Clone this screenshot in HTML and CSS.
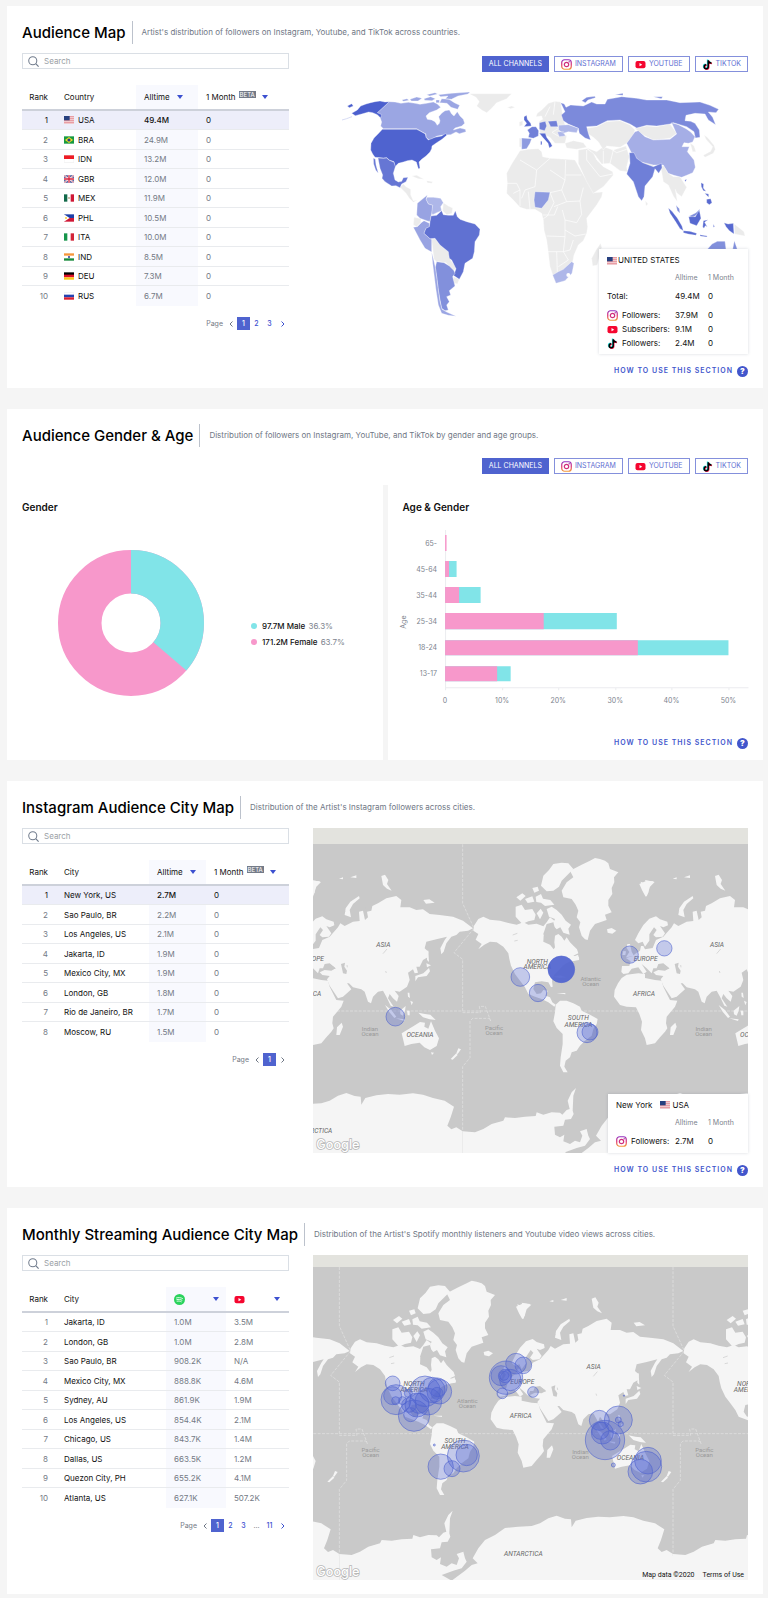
FILE: index.html
```html
<!DOCTYPE html>
<html lang="en">
<head>
<meta charset="utf-8">
<meta name="viewport" content="width=device-width, initial-scale=1">
<title>Audience</title>
<link rel="stylesheet" href="styles.css">
</head>
<body>
<svg class="defs" aria-hidden="true">
  <defs>
    <linearGradient id="ig" x1="0" y1="0" x2="0" y2="1"><stop offset="0" stop-color="#9332c0"/><stop offset=".5" stop-color="#dd2f72"/><stop offset="1" stop-color="#f39b3c"/></linearGradient>
    <symbol id="i-ig" viewBox="0 0 22 22"><rect x="1.5" y="1.5" width="19" height="19" rx="5.5" fill="none" stroke="url(#ig)" stroke-width="2.400"/><circle cx="11" cy="11" r="4.4" fill="none" stroke="#d02f7d" stroke-width="2.400"/><circle cx="16.4" cy="5.6" r="1.4" fill="#b033a0"/></symbol>
    <symbol id="i-yt" viewBox="0 0 22 22"><rect x="1" y="4" width="20" height="14.500" rx="4" fill="#f5062f"/><path d="M9 8v6.500l5.500-3.250z" fill="#fff"/></symbol>
    <symbol id="i-tt" viewBox="0 0 22 22"><g fill="none" stroke-width="3"><path d="M11.200 1.200v13.300a4 4 0 1 1-4-4M11.200 1.500c.5 3.400 2.700 5.300 6.500 5.300" stroke="#25e5e0"/><path d="M13.600 3.400v13.300a4 4 0 1 1-4-4M13.600 3.700c.5 3.400 2.700 5.300 6.500 5.300" stroke="#fb2a56"/><path d="M12.400 2.300v13.300a4 4 0 1 1-4-4M12.400 2.600c.5 3.400 2.700 5.300 6.500 5.300" stroke="#000"/></g></symbol>
    <symbol id="i-sp" viewBox="0 0 22 22"><circle cx="11" cy="11" r="11" fill="#2ad35c"/><g fill="none" stroke="#fff" stroke-linecap="round" stroke-width="1.700"><path d="M5 7.800c4-1.200 8.500-.8 12 1.200M5.600 11.200c3.600-1 7.200-.5 10.200 1.200M6.200 14.400c3-.7 5.800-.4 8.400 1.100"/></g></symbol>
    <symbol id="i-search" viewBox="0 0 30 30"><circle cx="13" cy="13" r="11" fill="none" stroke="#707b8c" stroke-width="2.800"/><path d="M21 21l8 8" stroke="#707b8c" stroke-width="3.200"/></symbol>
    <symbol id="i-down" viewBox="0 0 18 12"><path d="M0 0h18l-9 12z" fill="#3c50d0"/></symbol>
    <symbol id="f-us" viewBox="0 0 30 24"><path fill="#f3d5d8" d="M0 0h30v24H0z"/><path d="M0 2h30M0 8h30M0 14h30M0 20h30" stroke="#e2868e" stroke-width="2.500"/><path fill="#27407f" d="M0 0h17v13H0z"/></symbol>
    <symbol id="f-br" viewBox="0 0 30 24"><path fill="#179a43" d="M0 1h30v22H0z"/><path fill="#f7df1e" d="M15 3l12 9-12 9-12-9z"/><circle cx="15" cy="12" r="4.800" fill="#1e3a94"/></symbol>
    <symbol id="f-id" viewBox="0 0 30 24"><path fill="#fff" stroke="#ddd" d="M.5 1.500h29v21H.5z"/><path fill="#ee1c25" d="M0 1h30v11H0z"/></symbol>
    <symbol id="f-gb" viewBox="0 0 30 24"><path fill="#243a86" d="M0 1h30v22H0z"/><path d="M0 1l30 22M30 1L0 23" stroke="#fff" stroke-width="4.500"/><path d="M0 1l30 22M30 1L0 23" stroke="#d8213b" stroke-width="1.500"/><path d="M15 1v22M0 12h30" stroke="#fff" stroke-width="7"/><path d="M15 1v22M0 12h30" stroke="#d8213b" stroke-width="4"/></symbol>
    <symbol id="f-mx" viewBox="0 0 30 24"><path fill="#fff" d="M0 1h30v22H0z"/><path fill="#12694a" d="M0 1h10v22H0z"/><path fill="#cf1735" d="M20 1h10v22H20z"/><circle cx="15" cy="12" r="2.500" fill="#8d6d3e"/></symbol>
    <symbol id="f-ph" viewBox="0 0 30 24"><path fill="#1c3fa8" d="M0 1h30v11H0z"/><path fill="#d01735" d="M0 12h30v11H0z"/><path fill="#fff" d="M0 1l17 11L0 23z"/><circle cx="6" cy="12" r="3" fill="#f7cf35"/></symbol>
    <symbol id="f-it" viewBox="0 0 30 24"><path fill="#fff" d="M0 1h30v22H0z"/><path fill="#17954b" d="M0 1h10v22H0z"/><path fill="#d32438" d="M20 1h10v22H20z"/></symbol>
    <symbol id="f-in" viewBox="0 0 30 24"><path fill="#fff" d="M0 1h30v22H0z"/><path fill="#f7973b" d="M0 1h30v7H0z"/><path fill="#178a3b" d="M0 16h30v7H0z"/><circle cx="15" cy="12" r="3" fill="#2a3c9a"/></symbol>
    <symbol id="f-de" viewBox="0 0 30 24"><path d="M0 1h30v8H0z"/><path fill="#e0102a" d="M0 8h30v8H0z"/><path fill="#fbc815" d="M0 16h30v7H0z"/></symbol>
    <symbol id="f-ru" viewBox="0 0 30 24"><path fill="#fff" stroke="#ddd" d="M.5 1.500h29v21H.5z"/><path fill="#2342b0" d="M0 8h30v8H0z"/><path fill="#dd1f2e" d="M0 16h30v7H0z"/></symbol>

    <g id="world">
      <path class="geo-line" d="M0-500v177l34 75-60 73 26 20V5h53l-3-19h18l16 44-4-8H30l-8 8v110L0 167v200M0 0h1001"/>
      <g class="land">
        <g transform="translate(-103 -551)">
          <path d="M137 295L150 275 165 268 185 277 215 280 240 287 265 292 285 285 300 292 325 289 345 297 355 285 365 270 378 280 370 300 356 315 346 325 345 343 365 352 376 366 380 360 378 345 380 325 390 320 400 328 408 340 415 330 425 345 436 356 446 366 450 378 435 385 452 390 452 398 440 400 420 405 405 414 390 430 378 442 371 460 373 478 368 480 360 465 340 462 320 465 315 485 325 500 338 498 345 488 358 490 352 505 365 510 372 525 382 532 378 538 360 525 340 515 320 508 300 500 290 480 275 460 260 440 248 415 243 395 240 378 225 358 205 345 185 343 168 352 150 366 160 350 142 337 150 320 135 310z"/>
          <path d="M382 532L395 520 415 520 435 528 455 538 460 550 485 562 508 575 505 590 495 605 490 625 470 640 455 655 445 670 430 675 425 690 412 700 408 718 418 735 405 735 395 715 397 690 403 650 403 620 385 602 375 582 380 555z"/>
          <path d="M400 190L415 165 435 150 425 130 460 112 485 100 500 92 515 95 530 100 540 108 545 125 570 135 557 150 558 165 550 182 552 200 540 218 540 235 550 255 530 262 535 278 500 290 485 310 478 338 470 336 460 325 452 300 456 285 445 270 450 250 442 232 430 215 405 210z"/>
          <path d="M345 145L362 128 375 110 400 106 420 108 435 125 418 142 400 160 392 178 375 190 355 192 338 175z"/>
          <path d="M355 245L370 238 385 248 400 262 412 280 428 292 420 304 424 322 405 316 396 300 385 306 372 292 380 275 362 268z"/>
          <path d="M262 238L280 232 290 248 312 245 322 262 318 278 300 282 282 290 262 268z"/>
          <path d="M264 210l18-12 10 8-16 14zM290 215l22-8 6 16-20 4zM322 208l16-8 6 14 22 4 12 14-28 4-12-10-14-2zM325 258l12-14 8 12-10 20zM312 182l16-4 4 12-14 6zM375 448l20-4 18 6-20 2zM385 497l26 0v4zM435 388l14-6 4 14z"/>
          <path d="M536 306L550 302 564 310 552 319 538 316zM633 170L655 160 676 162 662 178 660 196 652 208 642 190z"/>
          <path d="M103 912L140 915 165 905 190 890 225 880 230 870 260 872 290 868 322 866 325 855 345 862 370 855 395 856 402 862 415 848 424 845 418 820 430 795 443 782 435 805 433 850 436 860 428 875 410 877 405 895 378 898 380 922 395 930 408 922 405 942 425 950 440 940 455 945 462 925 455 912 475 905 480 925 485 935 470 955 445 962 410 975 440 992 480 962 500 945 518 940 503 925 520 895 540 870 570 855 600 834 640 830 680 828 705 820 730 805 755 797 780 806 798 808 800 832 812 812 845 804 880 800 915 802 955 798 985 802 1015 812 1050 820 1078 838 1068 870 1058 895 1070 906 1085 900 1104 912V1200H103z"/>
          <path fill="#c9c9c9" d="M345 320l10-30 20-5 8 30-12 14-22 2z"/>
        </g>
        <g transform="translate(202 -573)">
          <path d="M315 360L325 340 340 315 358 296 378 289 390 298 412 305 414 316 400 322 390 318 405 340 398 350 378 352 370 345 380 330 372 322 358 343 358 362 345 380 338 365 325 370z"/>
          <path d="M345 388L368 384 378 360 400 350 425 322 432 310 445 318 470 305 490 303 488 275 500 272 506 300 515 292 512 275 525 272 528 258 545 250 570 235 600 228 615 240 612 262 640 262 660 270 680 268 700 282 730 285 770 290 800 302 830 325 815 332 790 335 780 345 765 350 750 370 742 395 735 403 732 385 745 360 752 350 720 358 690 365 685 385 696 395 694 412 680 420 670 440 660 440 665 458 655 460 650 448 635 458 640 480 632 500 610 515 595 512 607 528 602 545 590 535 580 522 575 535 592 560 583 557 570 530 560 512 545 515 530 530 524 550 515 545 505 515 495 508 470 502 458 490 452 490 465 508 440 530 425 535 400 497 392 478 400 468 378 465 370 457 385 450 405 452 418 445 400 430 385 432 380 445 370 445 365 460 350 445 335 432 350 455 340 462 325 442 305 446 295 460 280 462 274 456 276 438 298 438 302 424 288 414 308 408 318 400 330 392 333 378 340 378z"/>
          <path d="M264 490L275 474 290 464 325 460 345 462 345 474 375 480 395 482 400 500 415 530 420 540 442 542 435 560 410 590 408 610 412 625 405 635 390 652 375 670 350 675 345 655 333 630 336 605 328 582 318 562 290 560 270 555 252 530 254 510zM436 608L440 620 430 645 420 645 422 622z"/>
          <path d="M288 412L298 396 290 384 292 372 300 372 305 395 312 408zM277 405L280 393 288 394 286 405z"/>
          <path d="M445 285L448 265 462 245 488 228 490 235 470 252 460 270 464 292zM332 185L350 192 345 180 374 186 360 200 350 230 338 210zM555 168L566 164 576 180 572 192 586 212 572 206 560 195zM681 240l18-2 16 10-26 3zM428 176l12-4v6zM462 172l18-6v8z"/>
          <path d="M692 392l4 0 2 34-6-6zM690 430l14 6-12 6zM698 444l3 10-10 14-26 4-8 12 0-16 24-8z"/>
          <path d="M566 555L585 570 600 590 594 594 578 575zM598 595l28 3-2 5zM611 572L628 558 626 572 620 587 612 583zM632 572l8 0 0 14-6 0zM666 578L686 582 702 584 718 600 700 598 680 592zM634 518l5 0 2 16-6-4zM642 542l8 4-4 10z"/>
          <path d="M616 640L632 630 652 618 671 606 686 608 684 620 696 626 704 604 716 632 728 655 721 678 701 690 684 682 670 668 645 672 625 678zM704 697l9 1-6 7zM786 685l8 3-10 14-4-2zM780 700l4 5-15 14-6-2z"/>
          <path fill="#c9c9c9" d="M386 440L398 432 412 440 418 446 400 449 386 448zM434 432L446 428 444 440 452 452 450 462 440 460z"/>
        </g>
      </g>
      <path class="lake" d="M710-310l3 8M762-172l12-14M654-138l1 7M770-120l2 6M150-228l14-5M155-210l10-2M640-290l8-8"/>
      <g class="continent"><text x="763" y="-193">ASIA</text><text x="549" y="-149">EUROPE</text><text x="544" y="-46">AFRICA</text><text x="224" y="-142">NORTH</text><text x="224" y="-125">AMERICA</text><text x="347" y="28">SOUTH</text><text x="347" y="47">AMERICA</text><text x="873" y="79">OCEANIA</text><text x="552" y="367">ANTARCTICA</text></g>
      <g class="ocean"><text x="384" y="-91">Atlantic</text><text x="384" y="-76">Ocean</text><text x="94" y="56">Pacific</text><text x="94" y="71">Ocean</text><text x="723" y="61">Indian</text><text x="723" y="76">Ocean</text></g>
    </g>
  </defs>
</svg>

<main class="page">

<section class="card">
  <header class="head"><h2>Audience Map</h2><p>Artist's distribution of followers on Instagram, Youtube, and TikTok across countries.</p></header>
  <div class="split">
    <div>
      <label class="search"><svg><use href="#i-search"/></svg><input type="search" placeholder="Search" aria-label="Search countries"></label>
      <table class="ranks">
        <colgroup><col class="c-rank"><col class="c-country"><col class="c-all"><col></colgroup>
        <thead><tr><th>Rank</th><th>Country</th><th><button>Alltime<svg class="down"><use href="#i-down"/></svg></button></th><th><button>1 Month<sup>BETA</sup><svg class="down"><use href="#i-down"/></svg></button></th></tr></thead>
        <tbody>
          <tr class="on"><td>1</td><td><svg class="flag"><use href="#f-us"/></svg>USA</td><td>49.4M</td><td>0</td></tr>
          <tr><td>2</td><td><svg class="flag"><use href="#f-br"/></svg>BRA</td><td>24.9M</td><td>0</td></tr>
          <tr><td>3</td><td><svg class="flag"><use href="#f-id"/></svg>IDN</td><td>13.2M</td><td>0</td></tr>
          <tr><td>4</td><td><svg class="flag"><use href="#f-gb"/></svg>GBR</td><td>12.0M</td><td>0</td></tr>
          <tr><td>5</td><td><svg class="flag"><use href="#f-mx"/></svg>MEX</td><td>11.9M</td><td>0</td></tr>
          <tr><td>6</td><td><svg class="flag"><use href="#f-ph"/></svg>PHL</td><td>10.5M</td><td>0</td></tr>
          <tr><td>7</td><td><svg class="flag"><use href="#f-it"/></svg>ITA</td><td>10.0M</td><td>0</td></tr>
          <tr><td>8</td><td><svg class="flag"><use href="#f-in"/></svg>IND</td><td>8.5M</td><td>0</td></tr>
          <tr><td>9</td><td><svg class="flag"><use href="#f-de"/></svg>DEU</td><td>7.3M</td><td>0</td></tr>
          <tr><td>10</td><td><svg class="flag"><use href="#f-ru"/></svg>RUS</td><td>6.7M</td><td>0</td></tr>
        </tbody>
      </table>
      <nav class="pager" aria-label="Country pages"><span>Page</span><button class="arrow off" aria-label="Previous"><svg viewBox="0 0 8 12"><path d="M7 1L2 6l5 5"/></svg></button><button class="current">1</button><button>2</button><button>3</button><button class="arrow" aria-label="Next"><svg viewBox="0 0 8 12"><path d="M1 1l5 5-5 5"/></svg></button></nav>
    </div>
    <div>
      <div class="channels top"><button class="active">ALL CHANNELS</button><button><svg><use href="#i-ig"/></svg>INSTAGRAM</button><button><svg><use href="#i-yt"/></svg>YOUTUBE</button><button><svg><use href="#i-tt"/></svg>TIKTOK</button></div>
      <div class="map">
        <svg class="choropleth" viewBox="-21 216 1305 846" role="img" aria-label="Followers by country">
          <g class="none">
            <path d="M448 281L575 281 560 296 530 308 515 325 500 338 485 330 470 318 478 305 468 292zM562 322L575 318 585 322 572 326z"/>
            <path d="M240 562L250 552 258 560 272 568 272 585 280 602 292 600 280 607 268 595 258 580zM275 528L290 526 312 538 295 536zM320 542L338 545 335 550 322 548z"/>
            <path d="M648 350L652 340 665 330 685 310 705 304 722 306 724 320 728 345 735 375 716 392 740 408 735 430 705 430 690 412 660 398 658 364 668 358 665 348zM598 366L608 362 608 376 598 379zM598 415L604 415 603 442 598 440z"/>
            <path d="M735 430L760 422 790 428 800 442 770 448 740 444z"/>
            <path d="M600 452L625 448 655 446 665 455 668 470 690 475 740 478 765 480 775 498 790 525 810 555 820 578 848 576 845 590 830 615 800 655 803 680 800 700 790 722 775 735 762 765 755 800 735 835 708 850 700 830 690 800 684 750 680 720 672 690 670 660 665 640 645 628 620 628 600 622 580 600 560 580 562 550 560 520 575 492z"/>
            <path d="M842 730L845 742 832 795 818 798 815 775 828 750z"/>
            <path d="M775 450L800 446 820 460 830 480 850 500 878 515 880 525 850 560 820 580 800 545 775 490z"/>
            <path d="M800 443L830 455 850 440 880 450 918 438 928 470 920 500 922 515 900 512 870 490 845 492 825 465z"/>
            <path d="M800 385L830 380 860 365 900 362 930 375 945 390 940 405 920 430 900 442 860 438 850 450 835 425 820 412 805 402z"/>
            <path d="M945 385L980 378 1010 380 1050 372 1070 400 1050 415 1000 420 960 400zM960 482L1000 496 1000 502 960 492z"/>
            <path d="M1022 498L1032 498 1045 520 1060 530 1080 530 1100 562 1085 590 1070 578 1066 568 1072 605 1060 588 1045 555 1030 545zM1110 428L1122 438 1128 455 1118 455zM1186 448L1180 460 1155 472 1150 466 1172 454 1178 440 1158 418 1152 404 1164 414 1182 436zM976 602L984 612 978 618z"/>
            <path d="M1243 672L1272 695 1275 708 1243 702zM282 652L303 656 302 668 290 680 280 675zM370 608L385 618 398 624 396 640 380 644 368 632zM335 718L345 715 360 735 385 755 392 780 408 802 400 815 378 788 350 785 342 778zM400 830L418 838 412 852 400 848z"/>
            <path class="borders" d="M600 480l50 30-5 50-30 10-10 25M650 510l40-35M690 510l45 30 2-60M738 525h46M735 540l-10 30-35 8M690 578l12 30-20 40-12 8M560 550h30l10 20-20 10M600 570v48M625 575l5 52M725 570l15 35-38 15M740 605l40-2 10-40M780 603l5 40-15 25-35-8-8-30M735 660l0 50-55-2M735 690l30 18 32-6M735 710l-5 45h-48M730 755l20-5 10-30M710 755l2 60M730 755l15 25-30 20M668 645l35 0 10-25M800 450l0 30 40 50 38-8M850 492l0-40M880 450l-10 40M860 438l30 20 30-10M690 320l-15 30M705 304l-5 40M690 365l26 20-20 12 20 12"/>
          </g>
          <path fill="#9ba6e3" d="M208 305L225 306 243 310 265 307 285 310 300 313 320 310 340 306 352 312 362 322 350 330 328 338 318 348 322 358 335 360 345 365 352 376 358 370 360 362 356 350 365 340 375 332 388 330 395 342 402 348 412 335 420 348 430 358 434 370 425 378 405 384 400 390 420 384 436 388 438 395 418 401 408 396 392 404 370 405 352 408 328 420 318 412 318 402 300 392 290 386 190 386 182 378 185 366 180 352 172 338z"/>
          <path fill="#9ba6e3" d="M270 298l20-7 16 4-12 8-20 0zM245 300l16-4 6 5-16 3zM312 296l20-6 14 6-10 6-22-1zM320 284l25-6 8 4-24 6zM355 284l40-4 55-4-6 6-30 6-20 10-18-2 8-8-22 2zM365 296l22 2 16 10 16 8-6 12-20-6-12-12-22-2zM348 300l10 0 0 8-10 0z"/>
          <path fill="#4b5fce" d="M95 340L112 330 122 318 138 312 152 308 165 305 180 303 195 306 208 305 172 338 185 344 182 354 172 344 158 338 146 336 125 342 106 347zM82 318L95 311 100 318 88 323z"/>
          <path stroke="#c3caef" stroke-width="2" fill="none" d="M66 360l14-4 16-6"/>
          <path fill="#4f63cf" d="M187 388L290 388 300 393 316 402 318 412 325 420 345 412 365 408 378 400 380 406 366 418 350 428 336 438 335 446 330 456 318 468 305 478 297 486 300 505 295 506 289 486 276 480 262 482 250 486 235 490 225 500 222 485 208 480 200 473 190 474 165 472 158 462 152 450 153 430 162 414 176 400z"/>
          <path fill="#6676d4" d="M174 474L190 475 200 474 208 481 222 487 226 500 220 520 225 540 235 546 245 544 250 533 264 532 258 545 245 552 240 563 228 557 215 558 195 545 186 535 188 525 180 505zM160 474L166 478 168 495 175 520 167 510 161 492z"/>
          <path fill="#7c8adb" d="M722 308L733 312 738 322 752 315 790 318 815 306 830 312 855 312 862 298 905 290 950 295 980 300 1040 300 1080 308 1140 306 1170 316 1196 328 1188 338 1165 336 1178 352 1187 374 1165 360 1155 342 1125 340 1098 346 1095 362 1112 364 1125 370 1138 390 1140 412 1126 414 1122 395 1100 380 1060 368 1050 372 1010 378 980 376 950 384 930 372 900 360 862 362 830 378 800 380 805 400 812 420 795 414 778 400 775 385 745 372 730 362 724 345 735 335zM785 302L800 292 825 289 826 293 804 300 796 308zM885 284l24-4 0 6zM1000 290l28 0-4 6z"/>
          <path fill="#a5aee6" d="M920 430L945 395 955 392 975 410 1000 420 1050 418 1070 402 1055 368 1075 374 1098 386 1112 396 1125 410 1118 426 1105 430 1092 428 1086 440 1108 440 1102 455 1122 480 1126 502 1118 518 1100 526 1085 532 1062 526 1045 520 1030 495 1000 495 960 485 935 460z"/>
          <path fill="#6f7fd8" d="M928 458L942 458 950 475 968 488 1000 500 1025 490 1026 504 1016 520 1005 506 998 530 975 558 972 590 965 602 955 590 940 545 920 522 930 490z"/>
          <path fill="#7180d8" d="M658 368L676 364 680 378 674 392 658 388zM622 390L636 380 648 380 656 392 655 408 640 415 625 412 628 400zM684 364L710 362 714 380 692 380z"/>
          <path fill="#5769d0" d="M612 350L620 346 622 358 632 370 634 378 612 380 620 370 612 360zM658 400L676 400 680 412 692 428 697 438 688 444 684 430 668 412zM662 424l4 0 0 10-4 0z"/>
          <path fill="#8e9be0" d="M605 414L635 416 630 430 620 446 605 448zM645 575L690 577 685 600 665 625 645 622 642 600z"/>
          <path fill="#aeb7e9" d="M716 376L745 374 775 385 770 398 745 395 730 400 716 390zM712 396L730 394 736 408 718 410zM698 825L715 815 730 808 755 785 762 790 756 820 735 842 708 850zM318 598L322 592 340 592 362 595 370 608 362 620 365 632 350 638 338 644 334 638 338 616 325 612z"/>
          <circle cx="745" cy="825" r="6" fill="#fff"/>
          <path fill="#98a3e2" d="M292 610L322 585 318 598 325 612 338 616 335 640 330 665 320 662 300 655 290 645zM280 682L292 680 304 668 312 662 328 670 328 682 318 685 312 700 330 716 335 718 335 756 315 745 300 720z"/>
          <path fill="#6071d2" d="M333 648L350 646 365 632 370 644 385 646 400 646 406 632 412 650 420 658 440 665 465 672 480 688 478 705 465 725 463 755 458 775 435 790 430 815 418 838 400 826 405 815 408 806 395 780 388 775 385 755 360 735 345 715 330 716 312 700 318 685 328 680 330 665z"/>
          <path fill="#8290dc" d="M350 785L372 788 388 798 402 812 405 820 398 830 405 858 388 872 392 885 380 890 388 905 380 915 385 930 375 932 365 925 360 900 355 870 350 830 346 802zM1068 616l10 10 2 14-8-8zM1108 648l20-10 12-12-6 16-18 12z"/>
          <path fill="#9aa5e3" d="M335 757L341 780 346 802 350 830 355 870 360 905 366 928 380 936 408 949 385 946 365 940 355 915 348 870 343 830 338 790z"/>
          <path fill="#5769d0" d="M1045 624L1056 634 1072 654 1086 678 1090 692 1080 686 1066 664 1050 640zM1090 692L1110 694 1130 700 1128 706 1104 702 1090 698zM1106 650L1126 650 1138 630 1143 655 1130 677 1110 670zM1150 662l14-3-10 8 8 14-6-4-4 8-4-4zM1212 668L1224 672 1240 670 1242 702 1228 692 1218 680zM1140 704l22 4-2 3-20-3zM1180 672l4 8-4 2zM1143 548l8 4-1 12 8 10-8-2-6-12zM1160 598l12-2 4 12-8 6-8-6zM1154 580l12 2 0 10zM1094 541l6-4-3 8z"/>
          <path fill="#8290dc" d="M1162 748L1176 732 1192 724 1215 724 1218 748zM1238 748L1243 722 1252 748z"/>
        </svg>
        <aside class="tip">
          <h3><svg class="flag"><use href="#f-us"/></svg>UNITED STATES</h3>
          <table>
            <thead><tr><td></td><th>Alltime</th><th>1 Month</th></tr></thead>
            <tbody>
              <tr class="total"><th>Total:</th><td>49.4M</td><td>0</td></tr>
              <tr><th><svg><use href="#i-ig"/></svg>Followers:</th><td>37.9M</td><td>0</td></tr>
              <tr><th><svg><use href="#i-yt"/></svg>Subscribers:</th><td>9.1M</td><td>0</td></tr>
              <tr><th><svg><use href="#i-tt"/></svg>Followers:</th><td>2.4M</td><td>0</td></tr>
            </tbody>
          </table>
        </aside>
      </div>
      <a class="howto" href="#map-help">HOW TO USE THIS SECTION<b>?</b></a>
    </div>
  </div>
</section>

<section class="card demo">
  <header class="head"><h2>Audience Gender &amp; Age</h2><p>Distribution of followers on Instagram, YouTube, and TikTok by gender and age groups.</p></header>
  <div class="channels wide"><button class="active">ALL CHANNELS</button><button><svg><use href="#i-ig"/></svg>INSTAGRAM</button><button><svg><use href="#i-yt"/></svg>YOUTUBE</button><button><svg><use href="#i-tt"/></svg>TIKTOK</button></div>
  <div class="panels">
    <div class="panel">
      <h3>Gender</h3>
      <div class="gender">
        <svg class="donut" viewBox="-73 -73 146 146" role="img" aria-label="Male 36.3%, female 63.7%">
          <circle r="51.250" fill="none" stroke="#f798cb" stroke-width="43.500"/>
          <circle r="51.250" fill="none" stroke="#81e4e8" stroke-width="43.500" pathLength="100" stroke-dasharray="36.3 63.7" transform="rotate(-90)"/>
        </svg>
        <ul class="legend"><li><i class="male"></i>97.7M Male <span>36.3%</span></li><li><i class="female"></i>171.2M Female <span>63.7%</span></li></ul>
      </div>
    </div>
    <div class="panel">
      <h3>Age &amp; Gender</h3>
      <svg class="ages" viewBox="0 0 345 180" role="img" aria-label="Audience share by age and gender">
        <path d="M42.500 2v157.500H345M42.500 159v3M99.500 159v3M155.500 159v3M212.500 159v3M268.500 159v3M325.500 159v3" fill="none" stroke="#ebecef"/>
        <g fill="#81e4e8"><path d="M42 33h11.500v16H42zM42 59h35.500v16H42zM42 85h171.500v16H42zM42 112h283v15H42zM42 138h65.500v15H42z"/></g>
        <g fill="#f798cb"><path d="M42 7h1.500v16H42zM42 33h4v16h-4zM42 59h14v16H42zM42 85h98.500v16H42zM42 112h192.500v15H42zM42 138h52v15H42z"/></g>
        <g class="cats"><text x="34" y="18">65-</text><text x="34" y="44">45-64</text><text x="34" y="70">35-44</text><text x="34" y="96">25-34</text><text x="34" y="122">18-24</text><text x="34" y="148">13-17</text></g>
        <g class="ticks"><text x="42" y="175">0</text><text x="99" y="175">10%</text><text x="155" y="175">20%</text><text x="212" y="175">30%</text><text x="268" y="175">40%</text><text x="325" y="175">50%</text><text transform="translate(3 94) rotate(-90)">Age</text></g>
      </svg>
      <a class="howto" href="#age-help">HOW TO USE THIS SECTION<b>?</b></a>
    </div>
  </div>
</section>

<section class="card">
  <header class="head"><h2>Instagram Audience City Map</h2><p>Distribution of the Artist's Instagram followers across cities.</p></header>
  <div class="split">
    <div>
      <label class="search"><svg><use href="#i-search"/></svg><input type="search" placeholder="Search" aria-label="Search Instagram cities"></label>
      <table class="ranks">
        <colgroup><col class="c-rank"><col class="c-city"><col class="c-all2"><col></colgroup>
        <thead><tr><th>Rank</th><th>City</th><th><button>Alltime<svg class="down"><use href="#i-down"/></svg></button></th><th><button>1 Month<sup>BETA</sup><svg class="down"><use href="#i-down"/></svg></button></th></tr></thead>
        <tbody>
          <tr class="on"><td>1</td><td>New York, US</td><td>2.7M</td><td>0</td></tr>
          <tr><td>2</td><td>Sao Paulo, BR</td><td>2.2M</td><td>0</td></tr>
          <tr><td>3</td><td>Los Angeles, US</td><td>2.1M</td><td>0</td></tr>
          <tr><td>4</td><td>Jakarta, ID</td><td>1.9M</td><td>0</td></tr>
          <tr><td>5</td><td>Mexico City, MX</td><td>1.9M</td><td>0</td></tr>
          <tr><td>6</td><td>London, GB</td><td>1.8M</td><td>0</td></tr>
          <tr><td>7</td><td>Rio de Janeiro, BR</td><td>1.7M</td><td>0</td></tr>
          <tr><td>8</td><td>Moscow, RU</td><td>1.5M</td><td>0</td></tr>
        </tbody>
      </table>
      <nav class="pager" aria-label="Instagram city pages"><span>Page</span><button class="arrow off" aria-label="Previous"><svg viewBox="0 0 8 12"><path d="M7 1L2 6l5 5"/></svg></button><button class="current">1</button><button class="arrow off" aria-label="Next"><svg viewBox="0 0 8 12"><path d="M1 1l5 5-5 5"/></svg></button></nav>
    </div>
    <div>
      <div class="map">
        <svg class="cities" viewBox="0 0 1305 975" role="img" aria-label="Instagram followers by city">
          <use href="#world" x="-552" y="549"/><use href="#world" x="449" y="549"/>
          <path fill="#e3e3de" d="M0 0h1305v48H0z"/>
          <g class="bubbles"><circle cx="247" cy="566" r="28"/><circle cx="622" cy="447" r="28"/><circle cx="675" cy="495" r="26"/><circle class="picked" cx="745" cy="424" r="40"/><circle cx="950" cy="380" r="26"/><circle cx="1054" cy="361" r="23"/><circle cx="822" cy="614" r="30"/><circle cx="831" cy="612" r="24"/></g>
          <text class="brand" x="10" y="962">Google</text>
        </svg>
        <aside class="tip small">
          <h3>New York<span><svg class="flag"><use href="#f-us"/></svg>USA</span></h3>
          <table>
            <thead><tr><td></td><th>Alltime</th><th>1 Month</th></tr></thead>
            <tbody><tr class="total"><th><svg><use href="#i-ig"/></svg>Followers:</th><td>2.7M</td><td>0</td></tr></tbody>
          </table>
        </aside>
      </div>
      <a class="howto" href="#city-help">HOW TO USE THIS SECTION<b>?</b></a>
    </div>
  </div>
</section>

<section class="card last">
  <header class="head"><h2>Monthly Streaming Audience City Map</h2><p>Distribution of the Artist's Spotify monthly listeners and Youtube video views across cities.</p></header>
  <div class="split">
    <div>
      <label class="search"><svg><use href="#i-search"/></svg><input type="search" placeholder="Search" aria-label="Search streaming cities"></label>
      <table class="ranks">
        <colgroup><col class="c-rank"><col class="c-stream"><col class="c-spot"><col></colgroup>
        <thead><tr><th>Rank</th><th>City</th><th><button class="apart" aria-label="Spotify listeners"><svg class="ch"><use href="#i-sp"/></svg><svg class="down"><use href="#i-down"/></svg></button></th><th><button class="apart" aria-label="YouTube views"><svg class="ch"><use href="#i-yt"/></svg><svg class="down"><use href="#i-down"/></svg></button></th></tr></thead>
        <tbody>
          <tr><td>1</td><td>Jakarta, ID</td><td>1.0M</td><td>3.5M</td></tr>
          <tr><td>2</td><td>London, GB</td><td>1.0M</td><td>2.8M</td></tr>
          <tr><td>3</td><td>Sao Paulo, BR</td><td>908.2K</td><td>N/A</td></tr>
          <tr><td>4</td><td>Mexico City, MX</td><td>888.8K</td><td>4.6M</td></tr>
          <tr><td>5</td><td>Sydney, AU</td><td>861.9K</td><td>1.9M</td></tr>
          <tr><td>6</td><td>Los Angeles, US</td><td>854.4K</td><td>2.1M</td></tr>
          <tr><td>7</td><td>Chicago, US</td><td>843.7K</td><td>1.4M</td></tr>
          <tr><td>8</td><td>Dallas, US</td><td>663.5K</td><td>1.2M</td></tr>
          <tr><td>9</td><td>Quezon City, PH</td><td>655.2K</td><td>4.1M</td></tr>
          <tr><td>10</td><td>Atlanta, US</td><td>627.1K</td><td>507.2K</td></tr>
        </tbody>
      </table>
      <nav class="pager" aria-label="Streaming city pages"><span>Page</span><button class="arrow off" aria-label="Previous"><svg viewBox="0 0 8 12"><path d="M7 1L2 6l5 5"/></svg></button><button class="current">1</button><button>2</button><button>3</button><i>...</i><button>11</button><button class="arrow" aria-label="Next"><svg viewBox="0 0 8 12"><path d="M1 1l5 5-5 5"/></svg></button></nav>
    </div>
    <div>
      <div class="map">
        <svg class="cities" viewBox="0 0 1305 975" role="img" aria-label="Monthly streaming audience by city">
          <use href="#world" x="-922" y="536"/><use href="#world" x="79" y="536"/><use href="#world" x="1080" y="536"/>
          <path fill="#e3e3de" d="M0 0h1305v36H0z"/>
          <g class="bubbles">
            <circle cx="239" cy="385" r="22"/><circle cx="249" cy="434" r="45"/><circle cx="239" cy="422" r="27"/><circle cx="248" cy="437" r="12"/><circle cx="269" cy="437" r="12"/><circle cx="336" cy="409" r="46"/><circle cx="379" cy="410" r="37"/><circle cx="358" cy="405" r="38"/><circle cx="374" cy="397" r="28"/><circle cx="372" cy="415" r="18"/><circle cx="303" cy="482" r="47"/><circle cx="293" cy="479" r="21"/><circle cx="312" cy="450" r="36"/><circle cx="286" cy="415" r="12"/><circle cx="288" cy="450" r="22"/><circle cx="346" cy="440" r="40"/><circle cx="318" cy="445" r="30"/>
            <circle cx="451" cy="603" r="48"/><circle cx="461" cy="600" r="32"/><circle cx="383" cy="635" r="38"/><circle cx="417" cy="641" r="24"/><circle cx="364" cy="570" r="3"/>
            <circle cx="579" cy="368" r="50"/><circle cx="609" cy="326" r="31"/><circle cx="631" cy="331" r="25"/><circle cx="564" cy="362" r="30"/><circle cx="576" cy="363" r="20"/><circle cx="573" cy="362" r="14"/><circle cx="592" cy="375" r="32"/><circle cx="568" cy="415" r="16"/><circle cx="660" cy="411" r="16"/>
            <circle cx="859" cy="496" r="30"/><circle cx="916" cy="495" r="42"/><circle cx="916" cy="495" r="9"/><circle cx="923" cy="507" r="8"/><circle cx="876" cy="555" r="59"/><circle cx="868" cy="534" r="33"/><circle cx="862" cy="527" r="26"/><circle cx="892" cy="556" r="29"/><circle cx="933" cy="422" r="2"/><circle cx="901" cy="630" r="6"/><circle cx="1005" cy="617" r="40"/><circle cx="1000" cy="635" r="46"/><circle cx="982" cy="650" r="37"/>
          </g>
          <text class="brand" x="10" y="962">Google</text>
        </svg>
        <p class="credit"><span>Map data ©2020</span><a href="#terms">Terms of Use</a></p>
      </div>
    </div>
  </div>
</section>

</main>
</body>
</html>
```

FILE: styles.css
```css
* { box-sizing: border-box; }

body {
  margin: 0;
  background: #f5f5f5;
  color: #111;
  font: 8px/12px Inter, "Liberation Sans", sans-serif;
}

h2, h3, p, ul { margin: 0; padding: 0; }
svg { display: block; }

button {
  border: 0;
  margin: 0;
  padding: 0;
  background: none;
  color: inherit;
  font: inherit;
}

.defs { position: absolute; width: 0; height: 0; }

.page {
  display: flex;
  flex-direction: column;
  gap: 21px;
  padding: 6px 5px 4px 7px;
}

.card { background: #fff; padding: 15px 15px 0; }
.card.last { padding-bottom: 14px; }

.head { display: flex; align-items: center; gap: 6px; margin-bottom: 9px; }
.head h2 { font-size: 15px; line-height: 23px; font-weight: 500; color: #000; white-space: nowrap; }
.head p { border-left: 1px solid #bcc2cc; padding-left: 9px; line-height: 23px; color: #6f7785; }

.split { display: grid; grid-template-columns: 267px minmax(0, 1fr); gap: 24px; }

.search {
  display: flex;
  align-items: center;
  gap: 5px;
  height: 16px;
  padding-left: 5px;
  border: 1px solid #dadfe5;
}
.search svg { width: 11px; height: 11px; }
.search input {
  flex: 1;
  min-width: 0;
  border: 0;
  padding: 0;
  outline: 0;
  background: none;
  font: inherit;
  -webkit-appearance: none;
  appearance: none;
}
.search input::placeholder { color: #9b9fa6; opacity: 1; }

.ranks { width: 100%; margin-top: 16px; table-layout: fixed; border-spacing: 0; }
.ranks th, .ranks td { padding: 0 0 0 8px; text-align: left; font-weight: 400; }
.ranks th { height: 26px; border-bottom: 2px solid #cdd1da; }
.ranks td { height: 20px; border-bottom: 1px solid #e9ebee; color: #747a85; }
.ranks tbody tr:nth-child(odd) td { height: 19px; }
.ranks tbody tr:last-child td { border-bottom: 0; }
.ranks th:first-child, .ranks td:first-child { padding: 0 8px 0 0; text-align: right; }
.ranks td:nth-child(2) { color: #111; }
.ranks th:nth-child(3), .ranks td:nth-child(3) { background: #f8f9fe; }
.ranks .on td, .ranks .on td:nth-child(3) { background: #edeefa; color: #111; }
.ranks .on td:nth-child(3) { font-weight: 500; }
.ranks th button { display: flex; align-items: center; gap: 7px; }
.ranks th button.apart { width: 100%; justify-content: space-between; padding-right: 7px; }
.ranks th:last-child button.apart { padding-right: 9px; }
.ranks sup {
  align-self: flex-start;
  margin: 0 -1px 5px -4px;
  padding: 0 1px;
  background: #747b88;
  color: #fff;
  font-size: 6px;
  line-height: 7px;
}
.c-rank { width: 34px; }
.c-country { width: 80px; }
.c-city { width: 93px; }
.c-stream { width: 110px; }
.c-all { width: 62px; }
.c-all2 { width: 57px; }
.c-spot { width: 60px; }

.down { width: 6px; height: 4px; }
.ch { width: 11px; height: 11px; }
.flag { display: inline-block; width: 10px; height: 8px; margin-right: 4px; vertical-align: -1px; }

.pager { display: flex; justify-content: flex-end; align-items: center; margin-top: 11px; color: #747a85; font-size: 7px; line-height: 13px; }
.pager span { margin-right: 1px; }
.pager button, .pager i { width: 13px; height: 13px; text-align: center; font-style: normal; }
.pager button { color: #3c50d0; font-weight: 500; }
.pager .current { background: #4f63cf; color: #fff; }
.pager .arrow svg { width: 4px; height: 6px; margin: 0 auto; overflow: visible; fill: none; stroke: #3c50d0; stroke-width: 2; }
.pager .off svg { stroke: #6f7785; }

.channels { display: flex; justify-content: flex-end; gap: 5px; }
.channels.top { padding-top: 3px; }
.channels.wide { padding: 2px 0 11px; }
.channels button {
  display: flex;
  align-items: center;
  gap: 3px;
  height: 16px;
  padding: 0 6px;
  border: 1px solid #8490dc;
  color: #5f6fd2;
  font-size: 7px;
  line-height: 14px;
}
.channels button.active { background: #4f63cf; border-color: #4f63cf; color: #fff; }
.channels svg { width: 11px; height: 11px; }

.map { position: relative; }
.map > svg { width: 100%; height: auto; }
.choropleth path { stroke-linejoin: round; }
.choropleth > path:not([stroke]) { stroke: #fff; stroke-width: 1; }
.none path { fill: #ebebeb; stroke: #fff; stroke-width: 1; }
.none .borders { fill: none; stroke-width: 2; }

.cities { background: #c9c9c9; font-family: Roboto, sans-serif; }
.land { fill: #f5f5f5; }
.geo-line { fill: none; stroke: #e4e4e4; stroke-width: 2; stroke-dasharray: 9 4; }
.lake { fill: none; stroke: #c9c9c9; stroke-width: 2; }
.continent text, .ocean text { text-anchor: middle; font-family: Roboto, sans-serif; }
.continent text { font-size: 20px; font-style: italic; fill: #666; paint-order: stroke; stroke: #f5f5f5; stroke-width: 2; }
.ocean text { font-size: 18px; fill: #999; }
.bubbles circle { fill: #4f63cf; fill-opacity: .3; stroke: #4f63cf; stroke-opacity: .9; stroke-width: 2; }
.bubbles .picked { fill-opacity: .92; }
.brand { font: 500 38px Inter, sans-serif; fill: #fff; stroke: #b4b4b4; stroke-width: 4; paint-order: stroke; }

.tip {
  position: absolute;
  right: 0;
  bottom: 0;
  width: 149px;
  padding: 4px 8px;
  background: #fff;
  box-shadow: 0 0 3px rgba(60, 70, 100, .2);
}
.tip.small { width: 140px; padding-bottom: 5px; }
.tip h3 { display: flex; align-items: center; gap: 8px; font-size: 8px; line-height: 14px; font-weight: 400; }
.tip h3 > .flag { margin-right: -7px; }
.tip h3 .flag { margin-top: 1px; }
.tip h3 span .flag { margin-right: 2px; }
.tip table { width: 100%; table-layout: fixed; border-spacing: 0; }
.tip th, .tip td { height: 14px; padding: 0; text-align: left; font-weight: 400; white-space: nowrap; }
.tip thead td { width: 68px; height: 22px; }
.tip.small thead td { width: 59px; }
.tip thead th { color: #7d838e; font-size: 7px; }
.tip thead th:nth-child(2) { width: 33px; }
.tip:not(.small) .total th, .tip:not(.small) .total td { height: 19px; padding-bottom: 5px; }
.tip tbody svg { display: inline-block; width: 11px; height: 11px; margin-right: 4px; vertical-align: -3px; }

.howto {
  display: flex;
  justify-content: flex-end;
  align-items: center;
  gap: 4px;
  height: 34px;
  color: #4256cc;
  font-size: 7px;
  font-weight: 600;
  letter-spacing: 1px;
  text-decoration: none;
}
.howto b { width: 11px; height: 11px; border-radius: 50%; background: #4256cc; color: #fff; font-size: 8px; line-height: 11px; letter-spacing: 0; text-align: center; }

.panels { display: grid; grid-template-columns: 1fr 1fr; gap: 5px; margin: 0 -15px; background: #f5f5f5; }
.panel { display: flex; flex-direction: column; min-height: 275px; padding: 16px 15px 0; background: #fff; }
.panel h3 { font-size: 10px; line-height: 12px; font-weight: 600; }
.panel .howto { margin-top: auto; }
.gender { display: flex; align-items: center; gap: 47px; margin: 37px 0 0 36px; }
.donut { width: 146px; height: 146px; }
.legend { padding-top: 22px; list-style: none; line-height: 16px; font-weight: 500; }
.legend span { margin-left: 1px; color: #7d838e; font-weight: 400; }
.legend i { display: inline-block; width: 6px; height: 6px; margin-right: 5px; border-radius: 50%; }
.male { background: #81e4e8; }
.female { background: #f798cb; }
.ages { width: 100%; height: auto; margin-top: 15px; overflow: visible; font-size: 7px; fill: #7d838e; }
.cats { text-anchor: end; }
.ticks { text-anchor: middle; }

.credit { position: absolute; right: 4px; bottom: 0; display: flex; gap: 8px; color: #111; font: 7px/10px Roboto, sans-serif; }
.credit a { color: inherit; text-decoration: none; }
```
